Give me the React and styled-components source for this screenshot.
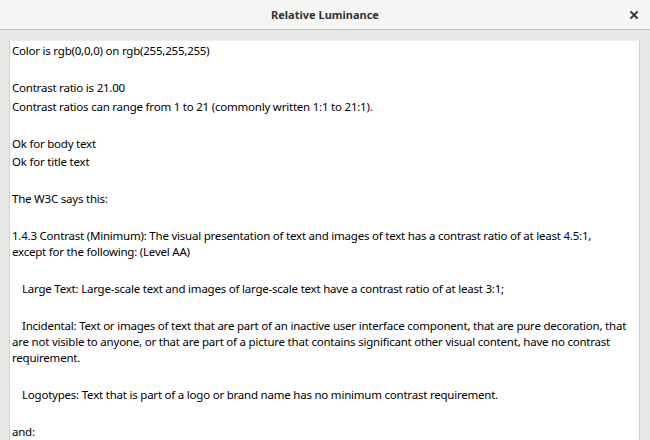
import React from "react";
import styled, { createGlobalStyle } from "styled-components";

const Global = createGlobalStyle`
  html, body { margin: 0; padding: 0; background: #e8e8e7; }
  body { width: 650px; height: 440px; overflow: hidden; }
`;

const Window = styled.div`
  width: 650px;
  height: 440px;
  display: flex;
  flex-direction: column;
  background: #e8e8e7;
  font-family: "Noto Sans", "DejaVu Sans", sans-serif;
  overflow: hidden;
`;

const TitleBar = styled.header`
  height: 29px;
  flex: none;
  display: grid;
  grid-template-columns: 1fr auto 1fr;
  align-items: center;
  background: #f5f5f4;
  border-bottom: 1px solid #c3c2bf;
`;

const Title = styled.h1`
  grid-column: 2;
  margin: 0;
  font-size: 11px;
  font-weight: 700;
  color: #2e3436;
`;

const Close = styled.button`
  justify-self: end;
  margin-right: 8px;
  width: 16px;
  height: 16px;
  padding: 0;
  border: 0;
  background: none;
  display: grid;
  place-items: center;
  color: #2e3436;
`;

const Body = styled.main`
  flex: 1;
  display: flex;
  padding: 10px 10px 0 9px;
  min-height: 0;
`;

const TextView = styled.div`
  flex: 1;
  background: #ffffff;
  border-left: 1px solid #cfcfcd;
  border-right: 1px solid #cfcfcd;
  border-top: 1px solid #ededec;
  padding: 2px 2px 0 2px;
  color: #000;
  font-size: 11.5px;
  letter-spacing: -0.22px;
  line-height: 16px;
  overflow: hidden;
`;

const Para = styled.p`
  margin: 0 0 2.5px;
  min-height: 16px;
  white-space: pre-line;
  text-indent: ${(p) => (p.$indent ? "10px" : "0")};
`;

const lines = [
  ["Color is rgb(0,0,0) on rgb(255,255,255)"],
  [""],
  ["Contrast ratio is 21.00"],
  ["Contrast ratios can range from 1 to 21 (commonly written 1:1 to 21:1)."],
  [""],
  ["Ok for body text"],
  ["Ok for title text"],
  [""],
  ["The W3C says this:"],
  [""],
  [
    "1.4.3 Contrast (Minimum): The visual presentation of text and images of text has a contrast ratio of at least 4.5:1,\nexcept for the following: (Level AA)",
  ],
  [""],
  ["Large Text: Large-scale text and images of large-scale text have a contrast ratio of at least 3:1;", true],
  [""],
  [
    "Incidental: Text or images of text that are part of an inactive user interface component, that are pure decoration, that are not visible to anyone, or that are part of a picture that contains significant other visual content, have no contrast requirement.",
    true,
  ],
  [""],
  ["Logotypes: Text that is part of a logo or brand name has no minimum contrast requirement.", true],
  [""],
  ["and:"],
];

export default function App() {
  return (
    <Window>
      <Global />
      <TitleBar>
        <Title>Relative Luminance</Title>
        <Close aria-label="Close">
          <svg width="8" height="8" viewBox="0 0 8 8">
            <path d="M1 1L7 7M7 1L1 7" stroke="#2e3436" strokeWidth="1.8" strokeLinecap="square" />
          </svg>
        </Close>
      </TitleBar>
      <Body>
        <TextView>
          {lines.map(([t, indent], i) => (
            <Para key={i} $indent={indent}>
              {t}
            </Para>
          ))}
        </TextView>
      </Body>
    </Window>
  );
}
